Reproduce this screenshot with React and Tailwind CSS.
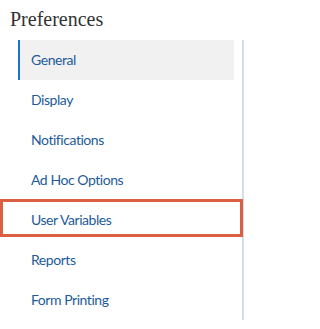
import React from "react";

const items = [
  "General",
  "Display",
  "Notifications",
  "Ad Hoc Options",
  "User Variables",
  "Reports",
  "Form Printing",
];

export default function App() {
  return (
    <div className="w-[247px] h-[329px] bg-white overflow-hidden">
      <h1 className="pl-[10px] pt-[7px] h-[40px] text-[20px] leading-[24px] text-[#333333] font-['Liberation_Serif',serif]">
        Preferences
      </h1>
      <nav className="ml-[18px] w-[226px] border-r-2 border-[#d5dde6] font-['Lato',sans-serif] text-[14px] tracking-[-0.45px] text-[#1d5b9b]">
        <ul>
          {items.map((item, i) => (
            <li key={item} className="relative h-[40px] w-[216px]">
              {i === 0 ? (
                <div className="h-full flex items-center pl-[11px] pb-[2px] bg-[#f1f1f1] border-l-2 border-[#1a73c8]">
                  {item}
                </div>
              ) : (
                <div className="h-full flex items-center pl-[13px] pb-[2px]">
                  {item}
                </div>
              )}
              {item === "User Variables" && (
                <span className="absolute left-[-18px] top-[-1px] w-[243px] h-[38px] border-[3px] border-[#dc5f42] pointer-events-none" />
              )}
            </li>
          ))}
        </ul>
      </nav>
    </div>
  );
}
